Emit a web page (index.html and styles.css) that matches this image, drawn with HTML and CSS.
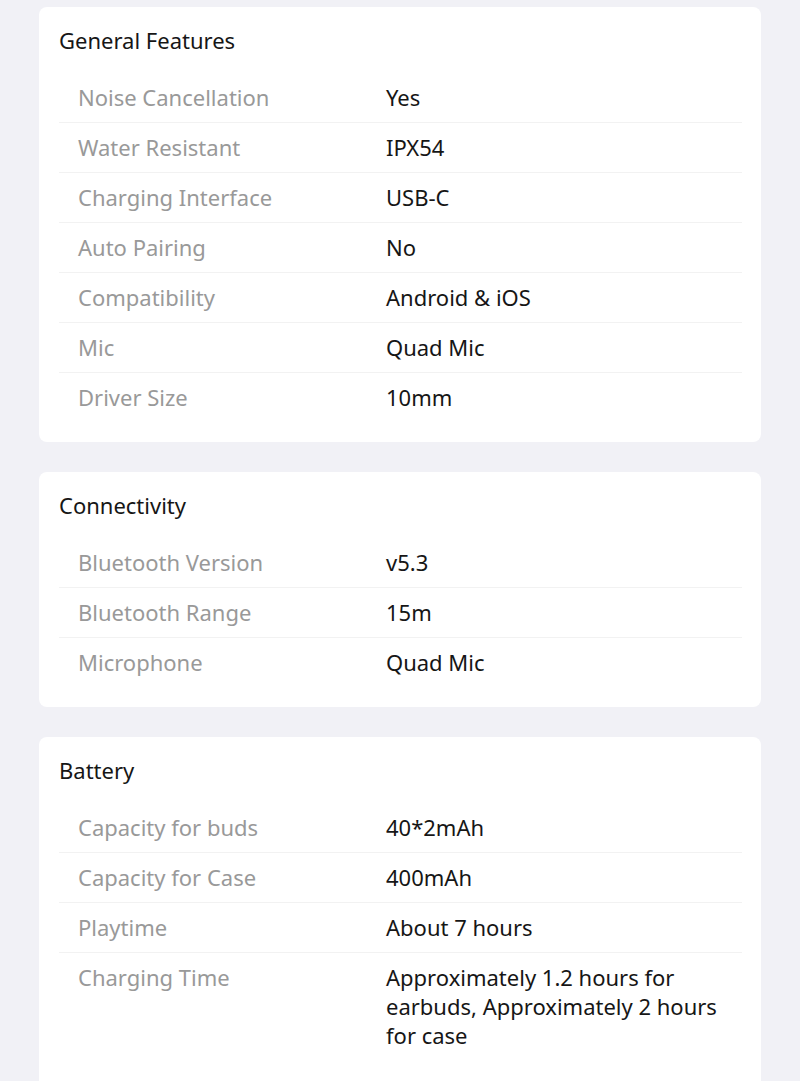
FILE: index.html
```html
<!DOCTYPE html>
<html lang="en">
<head>
<meta charset="utf-8">
<title>Specifications</title>
<link rel="stylesheet" href="styles.css">
</head>
<body>
<main class="page">
  <section class="card">
    <h2 class="card-title">General Features</h2>
    <div class="rows">
      <div class="row"><span class="label">Noise Cancellation</span><span class="value">Yes</span></div>
      <div class="row"><span class="label">Water Resistant</span><span class="value">IPX54</span></div>
      <div class="row"><span class="label">Charging Interface</span><span class="value">USB-C</span></div>
      <div class="row"><span class="label">Auto Pairing</span><span class="value">No</span></div>
      <div class="row"><span class="label">Compatibility</span><span class="value">Android &amp; iOS</span></div>
      <div class="row"><span class="label">Mic</span><span class="value">Quad Mic</span></div>
      <div class="row"><span class="label">Driver Size</span><span class="value">10mm</span></div>
    </div>
  </section>
  <section class="card">
    <h2 class="card-title">Connectivity</h2>
    <div class="rows">
      <div class="row"><span class="label">Bluetooth Version</span><span class="value">v5.3</span></div>
      <div class="row"><span class="label">Bluetooth Range</span><span class="value">15m</span></div>
      <div class="row"><span class="label">Microphone</span><span class="value">Quad Mic</span></div>
    </div>
  </section>
  <section class="card card-last">
    <h2 class="card-title">Battery</h2>
    <div class="rows">
      <div class="row"><span class="label">Capacity for buds</span><span class="value">40*2mAh</span></div>
      <div class="row"><span class="label">Capacity for Case</span><span class="value">400mAh</span></div>
      <div class="row"><span class="label">Playtime</span><span class="value">About 7 hours</span></div>
      <div class="row"><span class="label">Charging Time</span><span class="value">Approximately 1.2 hours for earbuds, Approximately 2 hours for case</span></div>
    </div>
  </section>
</main>
</body>
</html>
```

FILE: styles.css
```css
html, body {
  margin: 0;
  padding: 0;
  background: #f1f1f6;
}
body {
  font-family: "Noto Sans", "Open Sans", "Liberation Sans", sans-serif;
}
.page {
  display: flex;
  flex-direction: column;
  gap: 30px;
  padding: 7px 39px 40px;
}
.card {
  background: #ffffff;
  border-radius: 8px;
  padding: 19px 19px 19px 20px;
}
.card-last {
  padding-bottom: 40px;
}
.card-title {
  margin: 0 0 19px;
  font-size: 22px;
  line-height: 28px;
  font-weight: 400;
  color: #161616;
}
.rows {
  display: flex;
  flex-direction: column;
}
.row {
  display: grid;
  grid-template-columns: 308px 1fr;
  padding: 10px 19px;
  font-size: 22px;
  line-height: 29px;
  border-bottom: 1px solid #f2f2f2;
}
.row:last-child {
  border-bottom: none;
  padding-bottom: 11px;
}
.label {
  color: #999999;
}
.value {
  color: #161616;
  font-weight: 400;
}
```
